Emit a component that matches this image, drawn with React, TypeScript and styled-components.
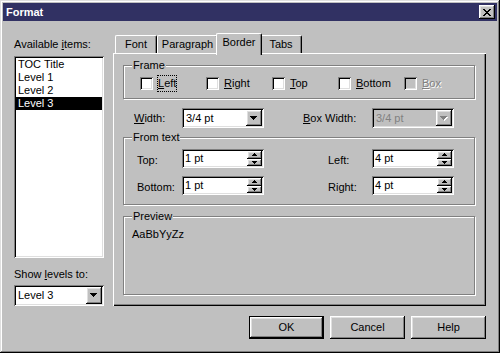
import React from "react";
import styled, { createGlobalStyle, css } from "styled-components";

const FACE = "#c0c0c0";
const LIGHT = "#dfdfdf";
const SHADOW = "#808080";
const TITLE = "#313163";

const GlobalStyle = createGlobalStyle`
  html, body { margin: 0; padding: 0; background: ${FACE}; }
  body {
    font-family: "Liberation Sans", Arial, sans-serif;
    font-size: 11px;
    line-height: 13px;
    color: #000;
  }
  * { box-sizing: border-box; }
`;

const raised = css`
  box-shadow: inset -1px -1px 0 #000, inset 1px 1px 0 #fff,
    inset -2px -2px 0 ${SHADOW}, inset 2px 2px 0 ${LIGHT};
`;

const sunken = css`
  box-shadow: inset 1px 1px 0 ${SHADOW}, inset -1px -1px 0 #fff,
    inset 2px 2px 0 #000, inset -2px -2px 0 ${LIGHT};
`;

const Window = styled.div`
  width: 500px;
  height: 353px;
  padding: 3px;
  background: ${FACE};
  display: flex;
  flex-direction: column;
  box-shadow: inset -1px -1px 0 #000, inset 1px 1px 0 ${LIGHT},
    inset -2px -2px 0 ${SHADOW}, inset 2px 2px 0 #fff;
`;

const TitleBar = styled.div`
  height: 18px;
  flex: none;
  background: ${TITLE};
  display: flex;
  align-items: center;
  justify-content: space-between;
  padding: 0 2px 0 3px;
`;

const TitleText = styled.span`
  color: #fff;
  font-weight: bold;
  font-size: 11px;
  line-height: 13px;
`;

const CloseButton = styled.div`
  width: 16px;
  height: 14px;
  background: ${FACE};
  display: flex;
  align-items: center;
  justify-content: center;
  padding-right: 1px;
  ${raised};
`;

const Body = styled.div`
  flex: 1;
  display: flex;
`;

const LeftCol = styled.div`
  width: 90px;
  margin-left: 11px;
  padding-top: 17px;
  display: flex;
  flex-direction: column;
`;

const RightCol = styled.div`
  width: 373px;
  margin-left: 9px;
  padding-top: 12px;
  display: flex;
  flex-direction: column;
`;

const Label = styled.div<{ $mt?: number }>`
  margin-top: ${(p) => p.$mt ?? 0}px;
  line-height: 13px;
  white-space: nowrap;
`;

const Key = styled.span`
  text-decoration: underline;
  text-underline-offset: 1px;
`;

const ListBox = styled.div`
  margin-top: 5px;
  height: 202px;
  background: #fff;
  padding: 2px;
  ${sunken};
`;

const ListItem = styled.div<{ $selected?: boolean }>`
  height: 13px;
  line-height: 13px;
  padding-left: 2px;
  white-space: nowrap;
  background: ${(p) => (p.$selected ? "#000" : "transparent")};
  color: ${(p) => (p.$selected ? "#fff" : "#000")};
`;

const ComboBox = styled.div<{ $w: number; $h: number; $mt?: number; $disabled?: boolean }>`
  width: ${(p) => p.$w}px;
  height: ${(p) => p.$h}px;
  margin-top: ${(p) => p.$mt ?? 0}px;
  flex: none;
  padding: 2px;
  display: flex;
  background: ${(p) => (p.$disabled ? FACE : "#fff")};
  ${sunken};
`;

const ComboValue = styled.div<{ $disabled?: boolean }>`
  flex: 1;
  display: flex;
  align-items: center;
  padding-left: 2px;
  white-space: nowrap;
  color: ${(p) => (p.$disabled ? SHADOW : "#000")};
`;

const DropButton = styled.div`
  width: 16px;
  flex: none;
  background: ${FACE};
  display: flex;
  align-items: center;
  justify-content: center;
  ${raised};
`;

const SpinBox = styled.div`
  width: 82px;
  height: 19px;
  padding: 2px;
  display: flex;
  background: #fff;
  ${sunken};
`;

const SpinValue = styled.div`
  flex: 1;
  display: flex;
  align-items: center;
  padding-left: 1px;
  white-space: nowrap;
`;

const SpinButtons = styled.div`
  width: 15px;
  display: flex;
  flex-direction: column;
`;

const SpinButton = styled.div`
  flex: 1;
  background: ${FACE};
  display: flex;
  align-items: center;
  justify-content: center;
  ${raised};
`;

const TabRow = styled.div`
  height: 20px;
  display: flex;
  align-items: flex-end;
  padding-left: 2px;
`;

const Tab = styled.div<{ $w: number; $active?: boolean }>`
  width: ${(p) => (p.$active ? p.$w + 4 : p.$w)}px;
  height: ${(p) => (p.$active ? 22 : 18)}px;
  margin: ${(p) => (p.$active ? "0 -2px -2px" : "0")};
  position: relative;
  z-index: ${(p) => (p.$active ? 1 : 0)};
  background: ${FACE};
  border-left: 1px solid #fff;
  border-top: 1px solid #fff;
  border-right: 1px solid #000;
  border-radius: 2px 2px 0 0;
  box-shadow: inset -1px 0 0 ${SHADOW};
  text-align: center;
  padding-top: ${(p) => (p.$active ? 2 : 2)}px;
  white-space: nowrap;
`;

const Panel = styled.div`
  height: 253px;
  background: ${FACE};
  padding: 2px 11px 10px 10px;
  display: flex;
  flex-direction: column;
  box-shadow: inset 1px 1px 0 #fff, inset -1px -1px 0 #000,
    inset -2px -2px 0 ${SHADOW};
`;

const Group = styled.fieldset<{ $mt: number; $grow?: boolean }>`
  margin: ${(p) => p.$mt}px 0 1px 0;
  padding: 0;
  min-width: 0;
  border: 1px solid ${SHADOW};
  box-shadow: inset 1px 1px 0 #fff, 1px 1px 0 #fff;
  ${(p) =>
    p.$grow &&
    css`
      flex: 1;
    `}
`;

const Legend = styled.legend`
  margin-left: 8px;
  padding: 0 1px;
  line-height: 13px;
  background: ${FACE};
`;

const CheckRow = styled.div`
  display: flex;
  padding: 3px 0 6px 16px;
`;

const CheckItem = styled.div`
  width: 66px;
  display: flex;
  align-items: center;
  gap: 4px;
`;

const CheckBox = styled.span<{ $disabled?: boolean }>`
  width: 13px;
  height: 13px;
  flex: none;
  background: ${(p) => (p.$disabled ? FACE : "#fff")};
  ${sunken};
`;

const CheckLabel = styled.span<{ $focused?: boolean; $disabled?: boolean }>`
  border: 1px dotted ${(p) => (p.$focused ? "#000" : "transparent")};
  padding: 1px 0;
  line-height: 13px;
  white-space: nowrap;
  color: ${(p) => (p.$disabled ? SHADOW : "#000")};
  text-shadow: ${(p) => (p.$disabled ? "1px 1px 0 #fff" : "none")};
`;

const FieldRow = styled.div`
  margin-top: 8px;
  height: 20px;
  display: flex;
  align-items: center;
`;

const FieldLabel = styled.div<{ $w: number; $ml: number }>`
  width: ${(p) => p.$w}px;
  margin-left: ${(p) => p.$ml}px;
  flex: none;
  white-space: nowrap;
`;

const SpinGrid = styled.div`
  display: grid;
  grid-template-columns: 45px 82px 64px 44px 82px;
  grid-auto-rows: 19px;
  row-gap: 8px;
  align-items: center;
  padding: 5px 0 9px 13px;
`;

const SpinLabel = styled.div`
  padding-top: 3px;
  white-space: nowrap;
`;

const PreviewText = styled.div`
  padding: 5px 0 0 8px;
`;

const ButtonRow = styled.div`
  margin-top: 10px;
  display: flex;
  justify-content: flex-end;
  gap: 6px;
`;

const PushButton = styled.button<{ $default?: boolean }>`
  width: 75px;
  height: 23px;
  padding: 0;
  border: none;
  background: ${FACE};
  font: inherit;
  line-height: 13px;
  color: #000;
  ${(p) =>
    p.$default
      ? css`
          box-shadow: inset 0 0 0 1px #000, inset -2px -2px 0 #000,
            inset 2px 2px 0 #fff, inset -3px -3px 0 ${SHADOW},
            inset 3px 3px 0 ${LIGHT};
        `
      : raised};
`;

const CloseIcon = () => (
  <svg width="8" height="7" viewBox="0 0 8 7" shapeRendering="crispEdges">
    <path
      fill="#000"
      d="M0 0h2v1H0zM6 0h2v1H6zM1 1h2v1H1zM5 1h2v1H5zM2 2h4v1H2zM3 3h2v1H3zM2 4h4v1H2zM1 5h2v1H1zM5 5h2v1H5zM0 6h2v1H0zM6 6h2v1H6z"
    />
  </svg>
);

const DownArrow = ({ disabled }: { disabled?: boolean }) => (
  <svg width="8" height="5" viewBox="0 0 8 5" shapeRendering="crispEdges">
    {disabled && <path fill="#fff" d="M1 1h7v1H1zM2 2h5v1H2zM3 3h3v1H3zM4 4h1v1H4z" />}
    <path
      fill={disabled ? SHADOW : "#000"}
      d="M0 0h7v1H0zM1 1h5v1H1zM2 2h3v1H2zM3 3h1v1H3z"
    />
  </svg>
);

const SpinArrow = ({ up }: { up?: boolean }) => (
  <svg width="5" height="3" viewBox="0 0 5 3" shapeRendering="crispEdges">
    <path
      fill="#000"
      d={up ? "M2 0h1v1H2zM1 1h3v1H1zM0 2h5v1H0z" : "M0 0h5v1H0zM1 1h3v1H1zM2 2h1v1H2z"}
    />
  </svg>
);

const Combo = ({
  value,
  w,
  h,
  mt,
  disabled,
}: {
  value: string;
  w: number;
  h: number;
  mt?: number;
  disabled?: boolean;
}) => (
  <ComboBox $w={w} $h={h} $mt={mt} $disabled={disabled}>
    <ComboValue $disabled={disabled}>{value}</ComboValue>
    <DropButton>
      <DownArrow disabled={disabled} />
    </DropButton>
  </ComboBox>
);

const Spin = ({ value }: { value: string }) => (
  <SpinBox>
    <SpinValue>{value}</SpinValue>
    <SpinButtons>
      <SpinButton>
        <SpinArrow up />
      </SpinButton>
      <SpinButton>
        <SpinArrow />
      </SpinButton>
    </SpinButtons>
  </SpinBox>
);

const items = ["TOC Title", "Level 1", "Level 2", "Level 3"];

const checks: { key: string; rest: string; focused?: boolean; disabled?: boolean }[] = [
  { key: "L", rest: "eft", focused: true },
  { key: "R", rest: "ight" },
  { key: "T", rest: "op" },
  { key: "B", rest: "ottom" },
  { key: "B", rest: "ox", disabled: true },
];

export default function App() {
  return (
    <>
      <GlobalStyle />
      <Window>
        <TitleBar>
          <TitleText>Format</TitleText>
          <CloseButton aria-label="Close">
            <CloseIcon />
          </CloseButton>
        </TitleBar>
        <Body>
          <LeftCol>
            <Label>
              Available <Key>i</Key>tems:
            </Label>
            <ListBox>
              {items.map((it) => (
                <ListItem key={it} $selected={it === "Level 3"}>
                  {it}
                </ListItem>
              ))}
            </ListBox>
            <Label $mt={10}>
              Show <Key>l</Key>evels to:
            </Label>
            <Combo value="Level 3" w={90} h={21} mt={4} />
          </LeftCol>
          <RightCol>
            <TabRow>
              <Tab $w={42}>Font</Tab>
              <Tab $w={61}>Paragraph</Tab>
              <Tab $w={42} $active>
                Border
              </Tab>
              <Tab $w={42}>Tabs</Tab>
            </TabRow>
            <Panel>
              <Group $mt={4}>
                <Legend>Frame</Legend>
                <CheckRow>
                  {checks.map((c, i) => (
                    <CheckItem key={i}>
                      <CheckBox $disabled={c.disabled} />
                      <CheckLabel $focused={c.focused} $disabled={c.disabled}>
                        <Key>{c.key}</Key>
                        {c.rest}
                      </CheckLabel>
                    </CheckItem>
                  ))}
                </CheckRow>
              </Group>
              <FieldRow>
                <FieldLabel $w={48} $ml={11}>
                  <Key>W</Key>idth:
                </FieldLabel>
                <Combo value="3/4 pt" w={82} h={20} />
                <FieldLabel $w={69} $ml={39}>
                  <Key>B</Key>ox Width:
                </FieldLabel>
                <Combo value="3/4 pt" w={82} h={20} disabled />
              </FieldRow>
              <Group $mt={3}>
                <Legend>From text</Legend>
                <SpinGrid>
                  <SpinLabel>Top:</SpinLabel>
                  <Spin value="1 pt" />
                  <span />
                  <SpinLabel>Left:</SpinLabel>
                  <Spin value="4 pt" />
                  <SpinLabel>Bottom:</SpinLabel>
                  <Spin value="1 pt" />
                  <span />
                  <SpinLabel>Right:</SpinLabel>
                  <Spin value="4 pt" />
                </SpinGrid>
              </Group>
              <Group $mt={4} $grow>
                <Legend>Preview</Legend>
                <PreviewText>AaBbYyZz</PreviewText>
              </Group>
            </Panel>
            <ButtonRow>
              <PushButton $default>OK</PushButton>
              <PushButton>Cancel</PushButton>
              <PushButton>Help</PushButton>
            </ButtonRow>
          </RightCol>
        </Body>
      </Window>
    </>
  );
}
